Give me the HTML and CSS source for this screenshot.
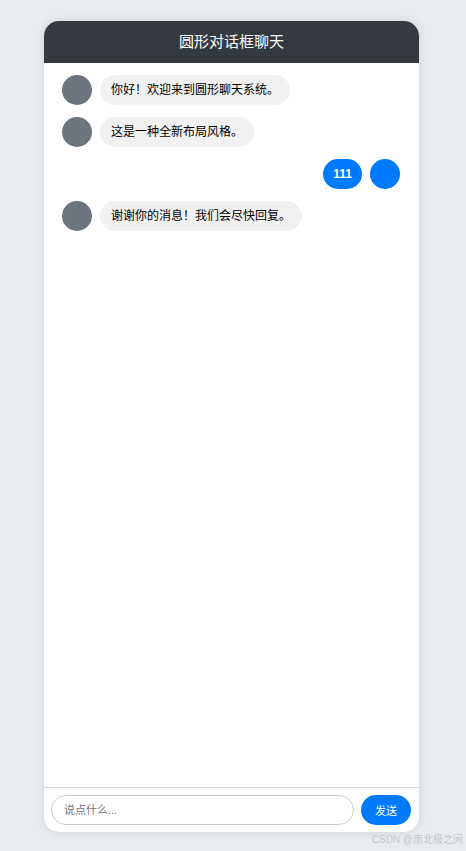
FILE: index.html
```html
<!DOCTYPE html>
<html>
<head>
    <meta charset="utf-8">
    <title>圆形对话框聊天</title>
    <link rel="stylesheet" href="styles.css">
</head>
<body>
    <div class="chat">
        <div class="chat-header">圆形对话框聊天</div>
        <div class="messages">
            <div class="msg">
                <div class="avatar"></div>
                <div class="bubble">你好！欢迎来到圆形聊天系统。</div>
            </div>
            <div class="msg">
                <div class="avatar"></div>
                <div class="bubble">这是一种全新布局风格。</div>
            </div>
            <div class="msg sent">
                <div class="bubble">111</div>
                <div class="avatar"></div>
            </div>
            <div class="msg">
                <div class="avatar"></div>
                <div class="bubble">谢谢你的消息！我们会尽快回复。</div>
            </div>
        </div>
        <div class="chat-footer">
            <input class="chat-input" type="text" placeholder="说点什么...">
            <button class="send-btn">发送</button>
        </div>
    </div>
    <div class="watermark">CSDN @南北极之间</div>
</body>
</html>
```

FILE: styles.css
```css
body {
    margin: 0;
    height: 851px;
    background-color: #e9ecef;
    font-family: "Liberation Sans", "Noto Sans CJK SC", sans-serif;
}

.chat {
    width: 375px;
    height: 811px;
    margin: 21px 0 0 44px;
    display: flex;
    flex-direction: column;
    background-color: #fff;
    border-radius: 15px;
    overflow: hidden;
    box-shadow: 0 0 10px rgba(0, 0, 0, 0.1);
}

.chat-header {
    height: 42px;
    line-height: 42px;
    text-align: center;
    background-color: #343a40;
    color: #fff;
    font-size: 15px;
}

.messages {
    flex: 1;
    display: flex;
    flex-direction: column;
    gap: 12px;
    padding: 12px 19px 12px 18px;
}

.msg {
    display: flex;
    align-items: center;
    gap: 8px;
}

.msg.sent {
    justify-content: flex-end;
}

.avatar {
    width: 30px;
    height: 30px;
    border-radius: 50%;
    background-color: #6c757d;
    flex-shrink: 0;
}

.sent .avatar {
    background-color: #007bff;
}

.bubble {
    padding: 7px 11px;
    line-height: 16px;
    font-size: 12px;
    color: #000;
    background-color: #f1f1f1;
    border-radius: 15px;
}

.sent .bubble {
    padding: 7px 10px;
    background-color: #007bff;
    color: #fff;
    font-weight: bold;
}

.chat-footer {
    display: flex;
    gap: 7px;
    padding: 7px 8px 7px 7px;
    border-top: 1px solid #ddd;
}

.chat-input {
    flex: 1;
    height: 30px;
    box-sizing: border-box;
    padding: 0 12px;
    border: 1px solid #ccc;
    border-radius: 15px;
    font-family: inherit;
    font-size: 11px;
    outline: none;
}

.chat-input::placeholder {
    color: #757575;
}

.send-btn {
    width: 50px;
    height: 30px;
    border: none;
    border-radius: 15px;
    background-color: #007bff;
    color: #fff;
    font-family: inherit;
    font-size: 11px;
    cursor: pointer;
}

.watermark {
    position: absolute;
    right: 3px;
    top: 831px;
    font-size: 10px;
    color: #c3c7cb;
}
```
